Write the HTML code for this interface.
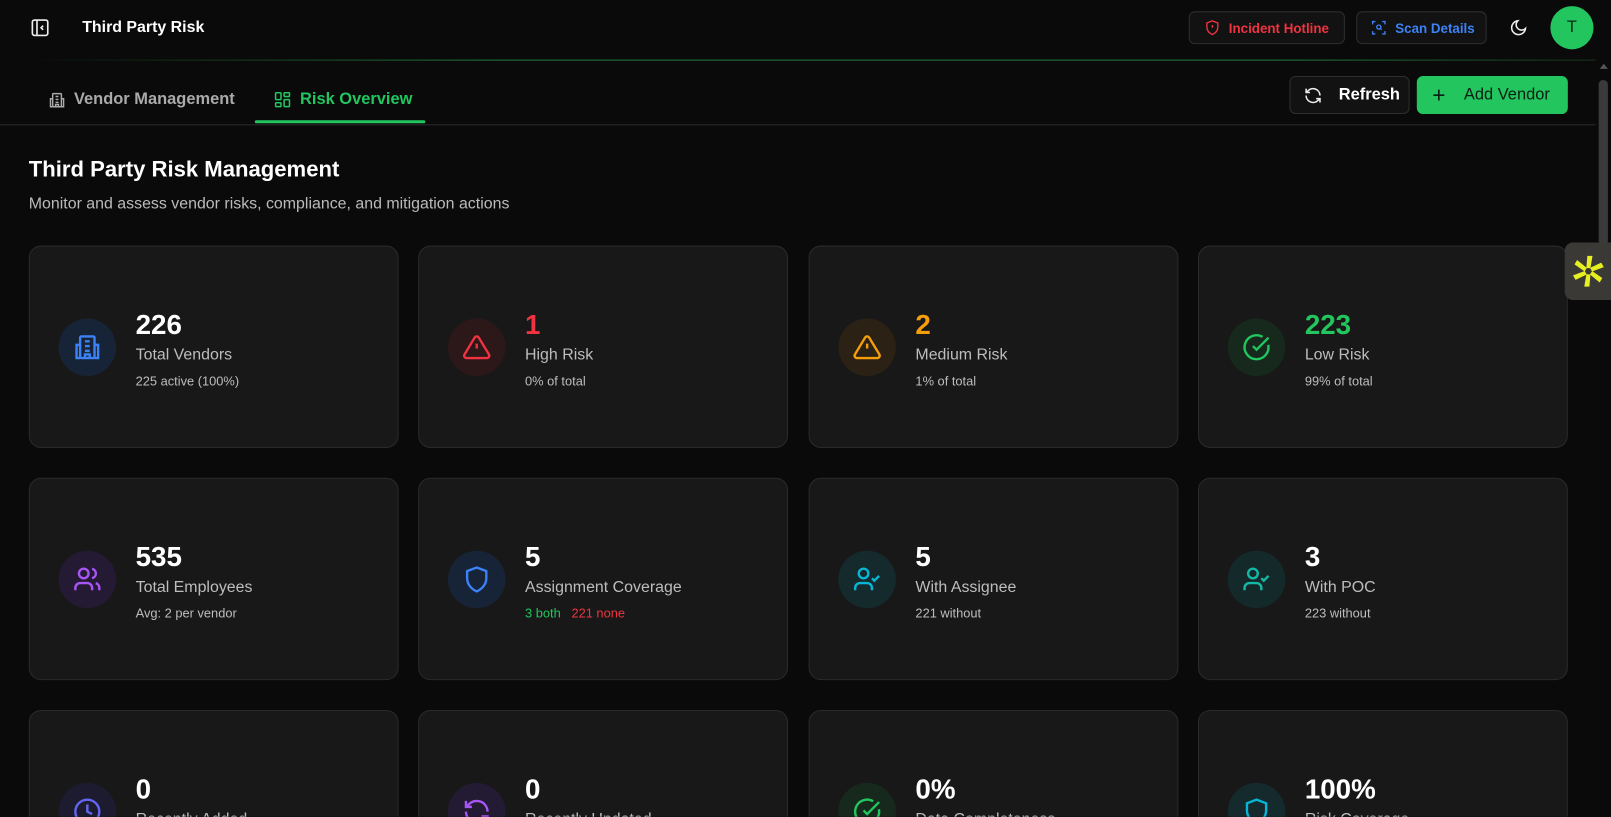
<!DOCTYPE html>
<html><head><style>
*{box-sizing:border-box;margin:0;padding:0}
html,body{width:1611px;height:817px;overflow:hidden;background:#0a0a0a}
body{font-family:"Liberation Sans",sans-serif;color:#fff}
#w{position:absolute;left:0;top:0;width:1568px;height:795px;transform:scale(1.02742);transform-origin:0 0;overflow:hidden}
.hdr{position:absolute;left:0;top:0;width:1553px;height:59px}
.hdr .line{position:absolute;left:24px;right:0;top:58px;height:1px;background:linear-gradient(90deg,#0a0a0a,#1f7a3a 30%,#1f7a3a 80%,#15301f)}
.btn{position:absolute;border:1px solid #2e2e2e;border-radius:6px;background:#121212;display:flex;align-items:center;font-size:13px;font-weight:bold}
.tabs{position:absolute;left:0;top:59px;width:1553px;height:63px;border-bottom:1px solid #2a2a2a}
.tab{position:absolute;top:29px;font-size:16px;font-weight:bold;display:flex;align-items:center;gap:8px}
.card{position:absolute;width:360px;height:197px;background:#181818;border:1px solid #2a2a2a;border-radius:12px}
.ic{position:absolute;left:28px;top:70px;width:56px;height:56px;border-radius:50%;display:flex;align-items:center;justify-content:center}
.num{position:absolute;left:103px;top:61px;font-size:27px;font-weight:bold}
.lbl{position:absolute;left:103px;top:97px;font-size:15.5px;color:#bdbdbd}
.sub{position:absolute;left:103px;top:124px;font-size:12.5px;color:#bdbdbd}
</style></head><body><div id="w">
<div class="hdr">
<svg style="position:absolute;left:30px;top:18px" width="18" height="18" viewBox="0 0 18 18" fill="none" stroke="#eee" stroke-width="1.6"><rect x="1.5" y="1.5" width="15" height="15" rx="2"/><path d="M6 2v14M12 7l-2 2 2 2"/></svg>
<div style="position:absolute;left:80px;top:18px;font-size:15.5px;font-weight:bold">Third Party Risk</div>
<div class="btn" style="left:1157px;top:11px;width:152px;height:32px;color:#ef3340"><svg style="margin:0 8px 0 14px" width="16" height="16" viewBox="0 0 24 24" fill="none" stroke="#ef3340" stroke-width="2"><path d="M12 2l8 3v6c0 5-3.5 9-8 11-4.5-2-8-6-8-11V5z"/><path d="M12 8v4M12 16h.01"/></svg>Incident Hotline</div>
<div class="btn" style="left:1320px;top:11px;width:127px;height:32px;color:#3b82f6"><svg style="margin:0 8px 0 13px" width="16" height="16" viewBox="0 0 24 24" fill="none" stroke="#3b82f6" stroke-width="2"><path d="M3 7V3h4M17 3h4v4M21 17v4h-4M7 21H3v-4"/><circle cx="12" cy="11" r="3"/><path d="M14 13l2 2"/></svg>Scan Details</div>
<svg style="position:absolute;left:1469px;top:18px" width="18" height="18" viewBox="0 0 24 24" fill="none" stroke="#eee" stroke-width="2"><path d="M21 13A9 9 0 1 1 11 3a7 7 0 0 0 10 10z"/></svg>
<div style="position:absolute;left:1509px;top:6px;width:42px;height:42px;border-radius:50%;background:#22c55e;color:#0a2a14;font-size:16px;display:flex;align-items:center;justify-content:center">T</div>
<div class="line"></div>
</div>
<div class="tabs">
<div class="tab" style="left:47px;color:#aaa"><svg width="17" height="17" viewBox="0 0 24 24" fill="none" stroke="#aaa" stroke-width="2"><rect x="6" y="3" width="12" height="18" rx="1"/><path d="M6 10H3v11h3M18 10h3v11h-3M10 7h4M10 11h4M10 15h4M10 21v-3h4v3"/></svg>Vendor Management</div>
<div class="tab" style="left:266px;color:#22c55e"><svg width="18" height="18" viewBox="0 0 24 24" fill="none" stroke="#22c55e" stroke-width="2"><rect x="3" y="3" width="7" height="9" rx="1"/><rect x="14" y="3" width="7" height="5" rx="1"/><rect x="14" y="12" width="7" height="9" rx="1"/><rect x="3" y="16" width="7" height="5" rx="1"/></svg>Risk Overview</div>
<div style="position:absolute;left:248px;top:58px;width:166px;height:3px;background:#22c55e;border-radius:2px"></div>
<div class="btn" style="left:1255px;top:15px;width:117px;height:37px;font-size:16px;color:#fff;background:#121212"><svg style="margin:0 16px 0 13px" width="18" height="18" viewBox="0 0 24 24" fill="none" stroke="#eee" stroke-width="2"><path d="M21 12a9 9 0 0 0-15.5-6.2L3 8M3 3v5h5M3 12a9 9 0 0 0 15.5 6.2L21 16M21 21v-5h-5"/></svg>Refresh</div>
<div class="btn" style="left:1379px;top:15px;width:147px;height:37px;font-size:16px;font-weight:normal;color:#0d1f12;background:#22c55e;border-color:#22c55e"><span style="font-size:22px;margin:0 18px 0 14px;font-weight:normal">+</span>Add Vendor</div>
</div>
<div style="position:absolute;left:28px;top:153px;font-size:21.5px;font-weight:bold">Third Party Risk Management</div>
<div style="position:absolute;left:28px;top:190px;font-size:15.5px;color:#bbb">Monitor and assess vendor risks, compliance, and mitigation actions</div>

<div class="card" style="left:28px;top:239px"><div class="ic" style="background:#172336"><svg width="28" height="28" viewBox="0 0 24 24" fill="none" stroke="#3b82f6" stroke-width="2"><rect x="6" y="3" width="12" height="18" rx="1"/><path d="M6 10H3v11h3M18 10h3v11h-3M10 7h4M10 11h4M10 15h4M10 21v-3h4v3"/></svg></div><div class="num">226</div><div class="lbl">Total Vendors</div><div class="sub">225 active (100%)</div></div>
<div class="card" style="left:407px;top:239px"><div class="ic" style="background:#2c1819"><svg width="28" height="28" viewBox="0 0 24 24" fill="none" stroke="#ef3340" stroke-width="2"><path d="M10.3 3.9L1.8 18a2 2 0 0 0 1.7 3h17a2 2 0 0 0 1.7-3L13.7 3.9a2 2 0 0 0-3.4 0zM12 9v4M12 17h.01"/></svg></div><div class="num" style="color:#ef3340">1</div><div class="lbl">High Risk</div><div class="sub">0% of total</div></div>
<div class="card" style="left:787px;top:239px"><div class="ic" style="background:#2b2114"><svg width="28" height="28" viewBox="0 0 24 24" fill="none" stroke="#f59e0b" stroke-width="2"><path d="M10.3 3.9L1.8 18a2 2 0 0 0 1.7 3h17a2 2 0 0 0 1.7-3L13.7 3.9a2 2 0 0 0-3.4 0zM12 9v4M12 17h.01"/></svg></div><div class="num" style="color:#f59e0b">2</div><div class="lbl">Medium Risk</div><div class="sub">1% of total</div></div>
<div class="card" style="left:1166px;top:239px"><div class="ic" style="background:#16291c"><svg width="28" height="28" viewBox="0 0 24 24" fill="none" stroke="#22c55e" stroke-width="2"><path d="M21.8 10A10 10 0 1 1 17 3.3"/><path d="M9 11l3 3L22 4"/></svg></div><div class="num" style="color:#22c55e">223</div><div class="lbl">Low Risk</div><div class="sub">99% of total</div></div>

<div class="card" style="left:28px;top:465px"><div class="ic" style="background:#241a33"><svg width="28" height="28" viewBox="0 0 24 24" fill="none" stroke="#a855f7" stroke-width="2"><circle cx="9" cy="7" r="4"/><path d="M16 21v-2a4 4 0 0 0-4-4H6a4 4 0 0 0-4 4v2M16 3.1a4 4 0 0 1 0 7.8M22 21v-2a4 4 0 0 0-3-3.9"/></svg></div><div class="num">535</div><div class="lbl">Total Employees</div><div class="sub">Avg: 2 per vendor</div></div>
<div class="card" style="left:407px;top:465px"><div class="ic" style="background:#172336"><svg width="28" height="28" viewBox="0 0 24 24" fill="none" stroke="#3b82f6" stroke-width="2"><path d="M12 2l8 3v6c0 5-3.5 9-8 11-4.5-2-8-6-8-11V5z"/></svg></div><div class="num">5</div><div class="lbl">Assignment Coverage</div><div class="sub"><span style="color:#22c55e">3 both</span>&nbsp;&nbsp;&nbsp;<span style="color:#ef3340">221 none</span></div></div>
<div class="card" style="left:787px;top:465px"><div class="ic" style="background:#142a2d"><svg width="28" height="28" viewBox="0 0 24 24" fill="none" stroke="#06b6d4" stroke-width="2"><circle cx="9" cy="7" r="4"/><path d="M16 21v-2a4 4 0 0 0-4-4H6a4 4 0 0 0-4 4v2M16 11l2 2 4-4"/></svg></div><div class="num">5</div><div class="lbl">With Assignee</div><div class="sub">221 without</div></div>
<div class="card" style="left:1166px;top:465px"><div class="ic" style="background:#14292a"><svg width="28" height="28" viewBox="0 0 24 24" fill="none" stroke="#14b8a6" stroke-width="2"><circle cx="9" cy="7" r="4"/><path d="M16 21v-2a4 4 0 0 0-4-4H6a4 4 0 0 0-4 4v2M16 11l2 2 4-4"/></svg></div><div class="num">3</div><div class="lbl">With POC</div><div class="sub">223 without</div></div>

<div class="card" style="left:28px;top:691px"><div class="ic" style="background:#1d1b30"><svg width="28" height="28" viewBox="0 0 24 24" fill="none" stroke="#6366f1" stroke-width="2"><circle cx="12" cy="12" r="10"/><path d="M12 6v6l4 2"/></svg></div><div class="num">0</div><div class="lbl">Recently Added</div></div>
<div class="card" style="left:407px;top:691px"><div class="ic" style="background:#231a33"><svg width="28" height="28" viewBox="0 0 24 24" fill="none" stroke="#a855f7" stroke-width="2"><path d="M21 12a9 9 0 0 0-15.5-6.2L3 8M3 3v5h5M3 12a9 9 0 0 0 15.5 6.2L21 16M21 21v-5h-5"/></svg></div><div class="num">0</div><div class="lbl">Recently Updated</div></div>
<div class="card" style="left:787px;top:691px"><div class="ic" style="background:#16291c"><svg width="28" height="28" viewBox="0 0 24 24" fill="none" stroke="#22c55e" stroke-width="2"><path d="M21.8 10A10 10 0 1 1 17 3.3"/><path d="M9 11l3 3L22 4"/></svg></div><div class="num">0%</div><div class="lbl">Data Completeness</div></div>
<div class="card" style="left:1166px;top:691px"><div class="ic" style="background:#142a2d"><svg width="28" height="28" viewBox="0 0 24 24" fill="none" stroke="#06b6d4" stroke-width="2"><path d="M12 2l8 3v6c0 5-3.5 9-8 11-4.5-2-8-6-8-11V5z"/></svg></div><div class="num">100%</div><div class="lbl">Risk Coverage</div></div>

<div style="position:absolute;left:1553px;top:59px;width:15px;height:740px;background:#0a0a0a"></div>
<div style="position:absolute;left:1557px;top:62px;width:0;height:0;border-left:4px solid transparent;border-right:4px solid transparent;border-bottom:5px solid #555"></div>
<div style="position:absolute;left:1556px;top:78px;width:9px;height:160px;background:#3a3a3a;border-radius:4px"></div>
<div style="position:absolute;left:1523px;top:236px;width:45px;height:56px;background:#3b3935;border-radius:8px 0 0 8px"></div>
<svg style="position:absolute;left:1529px;top:247px" width="34" height="34" viewBox="-17 -17 34 34"><g fill="#e6f020"><polygon points="-2,-3 2,-3 4,-15 -1,-15" transform="rotate(0)"/><polygon points="-2,-3 2,-3 4,-15 -1,-15" transform="rotate(60)"/><polygon points="-2,-3 2,-3 4,-15 -1,-15" transform="rotate(120)"/><polygon points="-2,-3 2,-3 4,-15 -1,-15" transform="rotate(180)"/><polygon points="-2,-3 2,-3 4,-15 -1,-15" transform="rotate(240)"/><polygon points="-2,-3 2,-3 4,-15 -1,-15" transform="rotate(300)"/></g></svg>
</div></body></html>
